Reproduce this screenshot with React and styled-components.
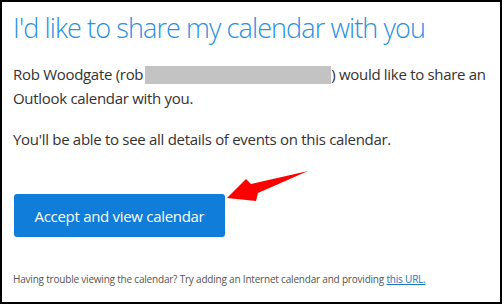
import React from "react";
import styled, { createGlobalStyle } from "styled-components";

const GlobalStyle = createGlobalStyle`
  html, body {
    margin: 0;
    padding: 0;
    background: #fff;
  }
  * {
    box-sizing: border-box;
  }
`;

const Frame = styled.div`
  position: relative;
  width: 502px;
  height: 304px;
  border: 2px solid #000;
  padding: 8px 11px 0;
  font-family: "Open Sans", "Noto Sans", sans-serif;
  color: #333;
  background: #fff;
`;

const Title = styled.h1`
  margin: 0;
  font-size: 27px;
  font-weight: 300;
  line-height: 36px;
  color: #2990e4;
  letter-spacing: -0.9px;
`;

const Para = styled.p`
  margin: ${(p) => p.$top || 0}px 0 0;
  font-size: 15px;
  line-height: 24px;
  letter-spacing: -0.3px;
  width: 484px;
`;

const Redacted = styled.span`
  display: inline-block;
  margin-left: 2px;
  width: 186px;
  height: 18px;
  background: #c3c3c3;
  vertical-align: -4px;
`;

const AcceptButton = styled.button`
  display: block;
  margin: 43px 0 0 1px;
  width: 211px;
  height: 43px;
  border: none;
  border-radius: 3px;
  background: #0f7dd9;
  color: #fff;
  font-family: inherit;
  font-size: 15px;
  letter-spacing: -0.3px;
  cursor: pointer;
`;

const Footnote = styled.p`
  margin: 35px 0 0;
  font-size: 10px;
  letter-spacing: -0.2px;
  color: #555;
`;

const Link = styled.a`
  color: #1a73c9;
  text-decoration: underline;
`;

const Arrow = styled.svg`
  position: absolute;
  left: 0;
  top: 0;
  pointer-events: none;
`;

export default function App() {
  return (
    <>
      <GlobalStyle />
      <Frame>
        <Title>I'd like to share my calendar with you</Title>
        <Para $top={16}>
          Rob Woodgate (rob<Redacted />) would like to share an Outlook calendar with you.
        </Para>
        <Para $top={17}>You'll be able to see all details of events on this calendar.</Para>
        <AcceptButton>Accept and view calendar</AcceptButton>
        <Footnote>
          Having trouble viewing the calendar? Try adding an Internet calendar and providing{" "}
          <Link href="#">this URL.</Link>
        </Footnote>
        <Arrow width="502" height="304" viewBox="0 0 502 304">
          <polygon
            points="225,196 244,177 249,182 306,169 256,191 254,199"
            fill="#f00"
          />
        </Arrow>
      </Frame>
    </>
  );
}
